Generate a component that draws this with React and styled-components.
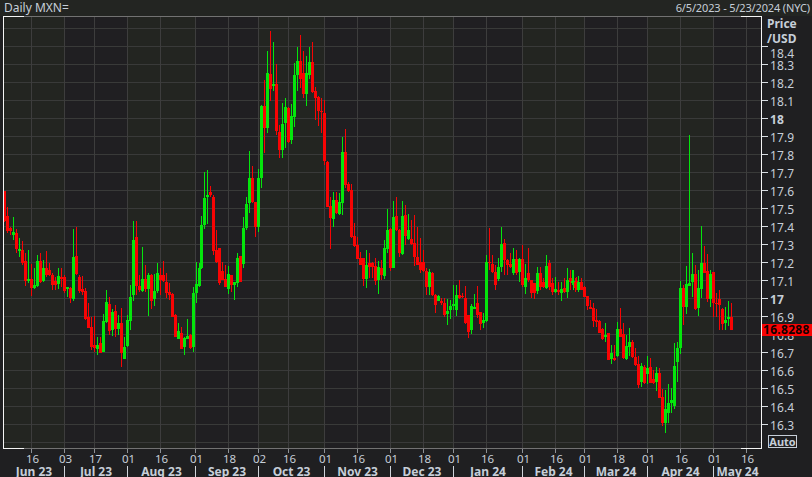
import React from "react";
import styled, { createGlobalStyle } from "styled-components";

const Global = createGlobalStyle`
  html, body { margin: 0; padding: 0; background: #1f1f21; }
  #root { width: 812px; height: 477px; overflow: hidden; }
  * { box-sizing: border-box; }
`;

const GREEN = "#04e60c";
const RED = "#f80404";

/* Each section: pixel origin of the trace, rows of [xTrace, colour, wickTop, wickBottom, bodyTop, bodyBottom] at 3x */
const sections = [
  [0, 180, [
    [12,"r",33,125,33,122],[22,"r",82,158,108,152],[31,"r",140,165,143,152],[40,"g",111,180,155,165],
    [49,"r",148,218,158,208],[58,"g",175,230,207,213],[67,"r",182,255,210,250],[76,"r",218,318,243,302],
    [85,"g",210,310,298,303],[94,"r",253,348,298,323],[103,"g",265,326,316,325],[112,"g",225,322,243,318],
    [121,"r",220,310,243,305],[130,"g",240,305,265,303],[139,"r",213,290,265,285],[148,"r",250,288,270,285],
    [157,"r",280,330,285,316],[166,"r",290,330,302,316],[175,"g",265,328,288,313],[184,"r",265,320,290,298],
    [193,"r",285,340,292,333],[202,"g",322,350,322,326],[211,"r",322,368,325,355],[220,"g",148,362,232,357],
    [229,"r",140,285,228,281],[238,"r",285,340,290,333],[247,"r",287,345,327,335],[256,"r",325,420,333,418],
    [265,"r",368,445,410,445],[274,"r",410,510,441,500],[283,"r",407,515,495,505],[292,"g",472,525,495,507],
    [301,"r",470,520,488,518],[310,"g",403,517,423,515],[319,"g",330,430,366,425],[328,"r",350,465,372,452],
    [337,"g",387,468,395,450],[346,"r",375,470,393,447],[355,"g",405,465,430,447],[364,"r",385,560,430,520],
    [373,"g",470,537,501,537],[382,"g",405,500,420,498],[391,"g",315,450,350,422],[400,"g",123,362,180,345],
    [409,"r",123,345,172,318],[418,"r",285,335,318,330],[427,"g",202,336,296,333],[436,"r",255,335,296,328],
    [445,"g",278,408,286,328],[454,"r",283,388,285,362],[463,"g",283,378,333,358],[472,"g",250,340,280,333],
    [481,"r",263,345,285,300],[490,"r",243,305,285,303],[499,"r",280,355,305,340],[508,"r",310,360,336,345],
    [517,"r",340,412,343,410],[526,"r",403,472,405,470],[535,"g",430,478,453,478],[544,"r",440,508,460,506],
    [553,"g",472,525,474,500],[562,"g",417,478,468,476],[571,"r",463,507,465,504],[580,"g",322,515,340,500],
    [589,"g",245,370,313,340],[597,"g",248,320,265,318],[604,"g",108,268,135,265],[613,"g",-24,147,55,135],
    [622,"g",-30,132,45,50],[631,"r",18,50,35,45],[640,"r",45,225,50,212],[649,"r",150,250,210,247],
    [658,"r",205,315,205,310],
  ]],
  [220, 150, [
    [6,"r",335,390,363,390],[15,"r",345,412,388,410],[24,"g",348,432,372,417],[33,"r",375,425,375,405],
    [42,"g",395,450,395,405],[52,"g",310,412,323,398],[61,"r",318,397,318,395],[70,"g",200,355,234,343],
    [79,"g",140,240,161,235],[88,"g",3,190,84,158],[97,"r",47,160,85,155],[106,"r",155,260,155,232],
    [115,"g",57,245,85,232],
  ]],
  [220, 20, [
    [124,"g",256,505,258,475],[133,"r",180,400,258,323],[142,"g",93,340,160,323],[151,"r",33,243,162,208],
    [160,"g",66,212,192,197],[169,"r",132,345,192,332],[178,"r",315,415,335,390],[187,"g",250,415,312,390],
    [196,"g",235,385,260,310],[205,"r",260,370,265,367],[214,"g",252,372,288,360],[223,"g",130,320,165,291],
    [232,"g",81,213,123,165],[241,"r",45,205,123,178],[250,"r",93,235,160,222],[259,"g",108,258,160,222],
    [268,"g",81,178,126,165],[277,"r",66,218,126,216],[286,"r",200,300,212,234],[295,"r",228,318,230,273],
    [304,"r",235,340,272,276],
  ]],
  [220, 150, [
    [313,"r",-150,45,-111,32],[322,"r",32,172,36,170],[331,"r",140,297,168,205],[340,"g",125,232,150,207],
    [349,"r",125,192,150,190],[358,"g",130,195,156,192],[367,"g",-39,195,5,158],[376,"r",-63,115,5,105],
    [385,"r",95,125,102,123],[394,"r",103,265,120,262],[403,"r",218,290,258,288],[412,"r",262,328,286,326],
    [421,"r",305,345,325,345],[430,"r",323,408,323,388],[439,"g",300,413,345,388],[448,"r",310,385,340,350],
    [457,"r",338,385,340,350],[466,"r",323,395,348,392],[475,"g",333,432,353,390],
  ]],
  [370, 190, [
    [6,"r",215,250,222,232],[15,"r",220,285,228,272],[24,"g",213,312,232,270],[33,"r",210,270,234,255],
    [42,"g",150,268,175,258],[51,"g",57,190,120,177],[60,"r",115,243,118,235],[70,"g",33,235,80,233],
    [79,"r",22,122,78,120],[88,"r",118,200,120,188],[97,"g",33,195,78,192],[106,"r",45,165,75,137],
    [115,"g",72,150,120,147],[124,"r",90,165,148,162],[133,"r",75,227,160,200],[142,"r",110,225,200,225],
    [151,"r",143,250,215,240],[160,"r",180,245,215,243],[169,"r",235,315,243,290],[178,"g",238,315,245,290],
    [187,"r",247,318,248,315],[196,"r",312,368,315,345],[205,"g",315,333,318,333],[214,"r",325,345,333,340],
    [223,"r",325,380,340,375],[232,"g",327,405,363,372],[241,"g",330,388,348,360],[250,"g",285,360,343,347],
    [259,"g",285,378,315,360],[268,"r",270,327,315,325],[277,"r",310,325,318,322],[286,"r",287,402,323,400],
    [295,"r",375,443,375,425],[304,"g",343,432,347,420],[313,"g",312,358,350,357],[322,"r",288,385,340,375],
    [331,"r",365,420,367,402],[340,"g",368,415,390,400],[349,"g",195,395,216,393],[358,"r",113,240,215,220],
    [367,"r",195,250,222,247],[376,"r",225,300,245,285],[385,"g",205,272,232,267],[394,"g",110,245,162,232],
    [403,"r",147,255,160,210],[412,"r",208,255,210,225],[421,"r",190,235,222,230],[430,"g",175,255,207,250],
    [439,"r",180,255,207,250],[448,"g",205,275,207,247],[457,"r",165,290,207,285],[466,"g",222,312,265,290],
    [475,"r",175,275,250,270],[484,"r",270,325,270,310],[493,"r",280,328,280,310],[502,"g",232,312,250,303],
    [511,"r",232,300,250,290],[520,"r",265,295,275,290],[529,"g",195,298,228,295],[538,"r",210,300,220,290],
    [547,"r",265,315,280,305],[556,"g",262,310,297,305],[565,"r",275,315,300,305],[574,"g",275,332,297,310],
    [583,"r",263,310,293,307],[592,"g",235,323,270,305],[601,"r",240,300,265,275],[610,"g",240,300,272,278],
    [619,"r",262,300,272,290],
  ]],
  [570, 250, [
    [6,"g",60,105,93,100],[15,"r",85,125,95,115],[24,"g",78,125,95,120],[33,"r",85,120,95,120],
    [42,"r",108,142,110,140],[51,"r",138,180,138,168],[60,"r",150,178,172,177],[69,"r",160,230,175,212],
    [78,"r",178,230,210,215],[87,"r",210,250,213,248],[96,"r",235,270,238,266],[105,"g",220,275,255,261],
    [114,"r",250,330,250,330],[123,"g",285,342,310,328],[132,"r",285,332,325,330],[142,"g",217,322,237,318],
    [151,"r",173,262,238,260],[160,"r",220,327,252,325],[169,"g",255,330,288,328],[178,"g",235,318,275,290],
    [187,"r",270,325,275,322],[196,"r",295,348,320,345],[205,"r",318,413,343,405],[214,"g",340,410,348,397],
    [223,"r",345,402,352,400],[232,"g",318,402,355,372],[241,"r",325,400,352,398],[250,"r",360,402,388,398],
    [259,"g",350,422,370,397],[268,"r",355,445,370,443],[277,"r",418,528,442,520],[286,"g",420,548,478,520],
    [295,"g",403,520,460,490],[304,"g",415,490,450,458],[313,"g",280,478,348,468],[322,"g",275,395,295,335],
    [331,"g",93,312,115,295],[340,"r",105,225,113,170],[349,"g",48,192,103,172],[358,"g",-345,108,100,107],
    [367,"g",9,142,72,97],[376,"r",45,180,72,178],[385,"g",60,197,113,175],[394,"g",-72,145,40,116],
    [403,"r",-12,65,40,70],[412,"r",12,155,63,148],[421,"g",60,170,72,148],[430,"r",65,200,66,160],
    [439,"r",130,200,158,162],[448,"r",120,240,148,165],[457,"r",175,240,177,222],[466,"g",172,240,210,218],
    [475,"g",153,228,200,208],[484,"r",158,240,200,240],
  ]],
];

const candles = sections.flatMap(([x0, y0, rows]) =>
  rows.map(([zx, c, wt, wb, bt, bb]) => ({
    cx: x0 + zx / 3,
    up: c === "g",
    wt: Math.round(y0 + wt / 3),
    wb: Math.round(y0 + wb / 3),
    bt: Math.round(y0 + bt / 3),
    bb: Math.round(y0 + bb / 3),
  }))
);

const monthBreaks = [4, 64, 127, 195, 258, 324, 390, 453, 522, 584, 647, 713, 761];
const dayTicks = [
  [31, "16"], [64, "03"], [94, "17"], [127, "01"], [160, "16"], [195, "01"], [228, "18"], [258, "02"],
  [288, "16"], [324, "01"], [357, "16"], [390, "01"], [423, "18"], [453, "01"], [486, "16"], [522, "01"],
  [555, "16"], [584, "01"], [617, "18"], [647, "01"], [680, "16"], [713, "01"], [746, "16"],
];
const months = ["Jun 23", "Jul 23", "Aug 23", "Sep 23", "Oct 23", "Nov 23", "Dec 23", "Jan 24", "Feb 24", "Mar 24", "Apr 24", "May 24"];

/* Price scale: 18.5 sits on y = 28.5 and each 0.1 takes 18px */
const priceLines = Array.from({ length: 24 }, (_, k) => 28.5 + 18 * k);
const priceRows = Array.from({ length: 22 }, (_, k) => {
  const v = (184 - k) / 10;
  return Number.isInteger(v) ? { text: String(v), major: true } : { text: v.toFixed(1), major: false };
});

const Page = styled.div`
  width: 812px;
  height: 477px;
  display: flex;
  flex-direction: column;
  background: #1f1f21;
  color: #c6ced8;
  font-family: "Noto Sans", Tahoma, sans-serif;
  overflow: hidden;
`;

const TitleBar = styled.header`
  height: 16px;
  flex: none;
  display: flex;
  justify-content: space-between;
  align-items: center;
  padding: 0 2px 0 4px;
  background: #232522;
  line-height: 16px;
`;

const ChartName = styled.span`
  font-size: 12px;
`;

const DateRange = styled.span`
  font-size: 11px;
  letter-spacing: -0.15px;
`;

const ChartRow = styled.div`
  flex: none;
  height: 433px;
  display: flex;
  padding-left: 3px;
`;

const Plot = styled.svg`
  display: block;
  flex: none;
  width: 759px;
  height: 433px;
`;

const PriceAxis = styled.div`
  position: relative;
  flex: 1;
  display: flex;
  flex-direction: column;
`;

const AxisTitle = styled.div`
  height: 21px;
  padding-left: 5px;
  font-size: 12px;
  font-weight: 700;
  line-height: 15px;
`;

const PriceRow = styled.div`
  height: 18px;
  display: flex;
  align-items: flex-start;
`;

const PriceTick = styled.i`
  flex: none;
  width: 6px;
  height: 1px;
  margin-top: 9px;
  background: #d8dde2;
`;

const PriceLabel = styled.span`
  margin: ${(p) => (p.$pushed ? 11 : 5)}px 0 0 2px;
  font-size: 12px;
  letter-spacing: 0.1px;
  line-height: 11px;
  font-weight: ${(p) => (p.$major ? 700 : 400)};
`;

const LastPrice = styled.div`
  position: absolute;
  left: 0;
  right: 0;
  top: 308px;
  height: 12px;
  background: #f80404;
  color: #100000;
  font-size: 12px;
  font-weight: 700;
  letter-spacing: 0.3px;
  line-height: 12px;
  padding-left: 1px;
`;

const AutoButton = styled.div`
  flex: none;
  width: 29px;
  height: 13px;
  margin: 2px 0 0 6px;
  border: 1px solid #c6ced8;
  font-size: 11px;
  font-weight: 700;
  line-height: 11px;
  text-align: center;
`;

const TimeAxis = styled.footer`
  flex: 1;
  display: flex;
  flex-direction: column;
`;

const DayRow = styled.div`
  height: 17px;
  flex: none;
  display: flex;
  padding-left: 31px;
`;

const DayCell = styled.div`
  flex: none;
  display: flex;
  flex-direction: column;
  align-items: flex-start;
`;

const DayTick = styled.i`
  width: 1px;
  height: 4px;
  background: #8d9196;
`;

const DayLabel = styled.span`
  margin-left: 1.5px;
  transform: translateX(-50%);
  font-size: 11.5px;
  line-height: 12px;
`;

const MonthRow = styled.div`
  height: 11px;
  flex: none;
  display: flex;
  padding-left: 4px;
`;

const MonthCell = styled.div`
  flex: none;
  text-align: center;
  font-size: 12px;
  font-weight: 700;
  line-height: 11px;
  white-space: nowrap;
  & + & {
    border-left: 1px solid #d0d4da;
  }
`;

function Chart() {
  return (
    <Plot viewBox="3 16 759 433" shapeRendering="crispEdges">
      {monthBreaks.slice(0, -1).map((x, i) => (
        <rect key={x} x={x} y={17} width={monthBreaks[i + 1] - x} height={431} fill={i % 2 ? "#201f22" : "#232521"} />
      ))}
      {priceLines.map((y) => (
        <rect key={y} x={4} y={y - 0.5} width={757} height={1} fill="#393a39" />
      ))}
      {dayTicks.map(([x]) => (
        <rect key={x} x={x} y={17} width={1} height={431} fill="#3d3d3d" />
      ))}
      {candles.map((c, i) => {
        const fill = c.up ? GREEN : RED;
        return (
          <g key={i} fill={fill}>
            <rect x={Math.round(c.cx - 0.5)} y={c.wt} width={1} height={Math.max(1, c.wb - c.wt)} />
            <rect x={Math.round(c.cx - 1.5)} y={c.bt} width={3} height={Math.max(1, c.bb - c.bt)} />
          </g>
        );
      })}
      <rect x={4} y={16} width={757} height={1} fill="#727272" />
      <rect x={4} y={448} width={757} height={1} fill="#727272" />
      <rect x={3} y={16} width={21} height={1} fill="#f4f4f4" />
      <rect x={3} y={448} width={21} height={1} fill="#f4f4f4" />
      <rect x={741} y={16} width={21} height={1} fill="#f4f4f4" />
      <rect x={741} y={448} width={21} height={1} fill="#f4f4f4" />
      <rect x={3} y={16} width={1} height={433} fill="#f4f4f4" />
      <rect x={761} y={16} width={1} height={433} fill="#f4f4f4" />
    </Plot>
  );
}

export default function App() {
  return (
    <Page>
      <Global />
      <TitleBar>
        <ChartName>Daily MXN=</ChartName>
        <DateRange>6/5/2023 - 5/23/2024 (NYC)</DateRange>
      </TitleBar>
      <ChartRow>
        <Chart />
        <PriceAxis>
          <AxisTitle>
            Price
            <br />
            /USD
          </AxisTitle>
          {priceRows.map((r, k) => (
            <PriceRow key={r.text}>
              <PriceTick />
              <PriceLabel $major={r.major} $pushed={k === 0}>
                {r.text}
              </PriceLabel>
            </PriceRow>
          ))}
          <AutoButton>Auto</AutoButton>
          <LastPrice>16.8288</LastPrice>
        </PriceAxis>
      </ChartRow>
      <TimeAxis>
        <DayRow>
          {dayTicks.map(([x, d], i) => (
            <DayCell key={x} style={{ width: (dayTicks[i + 1]?.[0] ?? x + 33) - x }}>
              <DayTick />
              <DayLabel>{d}</DayLabel>
            </DayCell>
          ))}
        </DayRow>
        <MonthRow>
          {months.map((m, i) => (
            <MonthCell key={m} style={{ width: monthBreaks[i + 1] - monthBreaks[i] }}>
              {m}
            </MonthCell>
          ))}
        </MonthRow>
      </TimeAxis>
    </Page>
  );
}
